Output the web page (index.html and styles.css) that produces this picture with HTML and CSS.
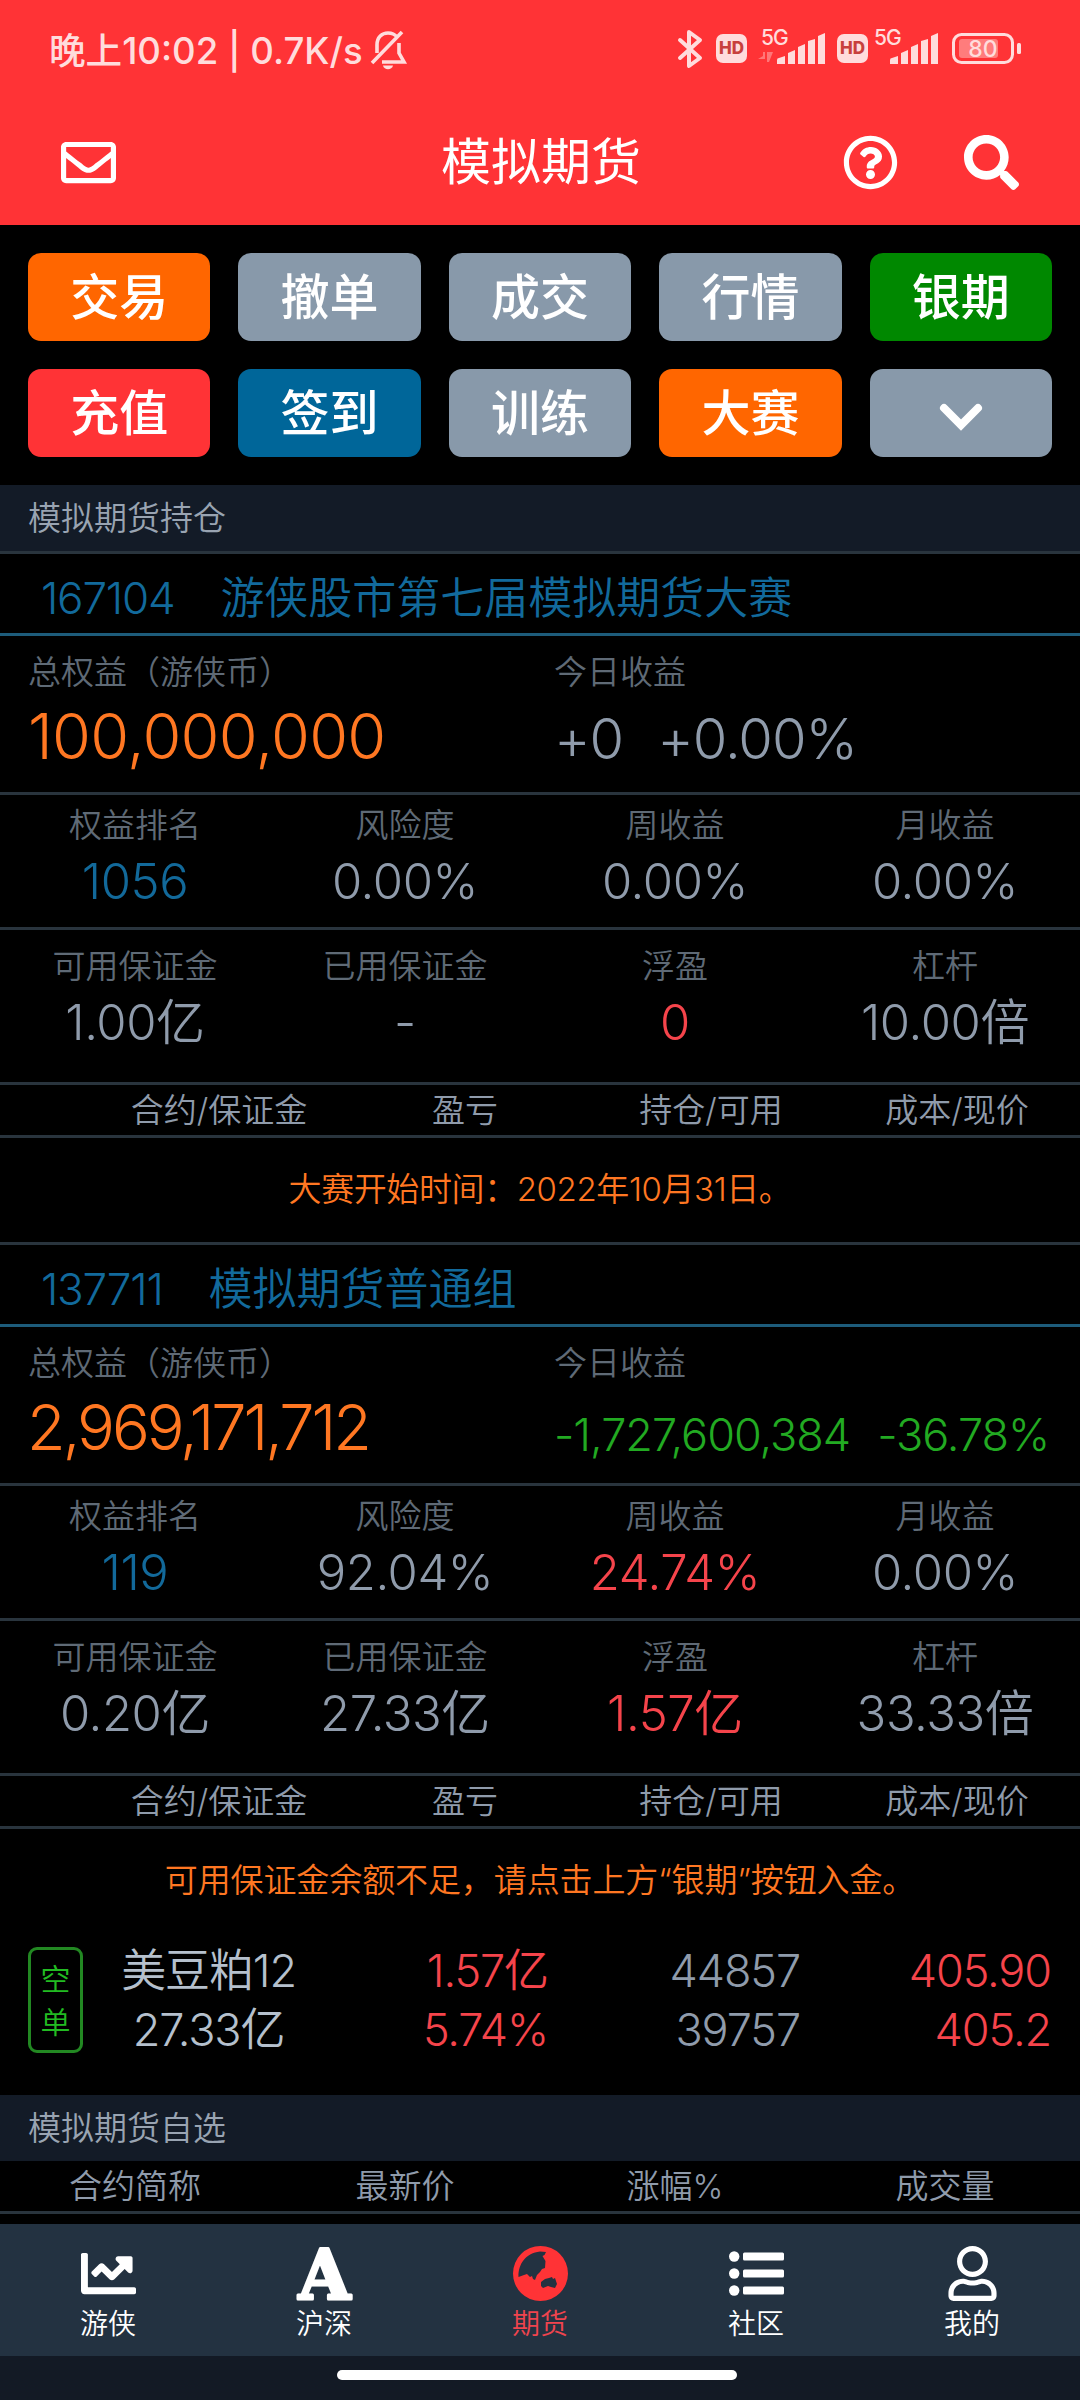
FILE: index.html
```html
<!DOCTYPE html>
<html lang="zh-CN">

<head>
    <meta charset="UTF-8">
    <meta name="viewport" content="width=device-width, initial-scale=1.0">
    <title>模拟期货</title>
    <link rel="stylesheet" href="styles.css">
</head>

<body>
    <header>
        <!-- phone status bar -->
        <div class="status">
            <span class="time">晚上10:02 | 0.7K/s</span>
            <svg class="bell" width="36" height="40" viewBox="0 0 36 40" fill="none" stroke="#ffdcdc" stroke-width="3.6">
                <path d="M7 23V15C7 7 12 3 18 3c4 0 7 1.500 9 4M29 13v10l5 9H12M32 2L2 33" />
                <path d="M13 35.500h10c-1 5-9 5-10 0z" fill="#ffdcdc" stroke="none" />
            </svg>
            <div class="signals">
                <svg class="bluetooth" width="26" height="40" viewBox="0 0 26 40" fill="none" stroke="#ffdcdc" stroke-width="4" stroke-linejoin="round" stroke-linecap="round">
                    <path d="M3 11l20 18-11 8V3l11 8L3 29" />
                </svg>
                <span class="hd">HD</span>
                <svg class="bars" width="68" height="38" viewBox="0 0 68 38" fill="#ffdcdc">
                    <text x="3" y="17" class="net">5G</text>
                    <path d="M0 31h7v-7h-2v4zM9 24h6l-4 10H9z" opacity=".4" />
                    <path d="M19 36v-4q0-2 2-2l6-2v8zM30 36V25l7-3v14zM40 36V19l7-3v20zM50 36V13l7-2v25zM60 36V8l7-3v31z" />
                </svg>
                <span class="hd second">HD</span>
                <svg class="bars two" width="68" height="38" viewBox="4 0 68 38" fill="#ffdcdc">
                    <text x="7" y="17" class="net">5G</text>
                    <path d="M23 36v-4q0-2 2-2l6-2v8zM34 36V25l7-3v14zM44 36V19l7-3v20zM54 36V13l7-2v25zM64 36V8l7-3v31z" />
                </svg>
                <svg class="battery" width="70" height="32" viewBox="0 0 70 32">
                    <rect x="1.500" y="1.500" width="59" height="28" rx="8" fill="none" stroke="#ffdcdc" stroke-width="3" />
                    <rect x="7" y="6" width="39" height="19" rx="3" fill="#ff7c7c" />
                    <rect x="65" y="10" width="4" height="11" rx="1.500" fill="#ffdcdc" />
                    <text x="31" y="24" text-anchor="middle" fill="#ffdcdc" class="percent">80</text>
                </svg>
            </div>
        </div>

        <div class="topbar">
            <svg class="mail" viewBox="0 0 512 512">
                <path d="M464 64H48C21.490 64 0 85.490 0 112v288c0 26.510 21.490 48 48 48h416c26.510 0 48-21.490 48-48V112c0-26.510-21.490-48-48-48zm0 48v40.805c-22.422 18.259-58.168 46.651-134.587 106.490-16.841 13.247-50.201 45.072-73.413 44.701-23.208.375-56.579-31.459-73.413-44.701C106.180 199.465 70.425 171.067 48 152.805V112h416zM48 400V214.398c22.914 18.251 55.409 43.862 104.938 82.646 21.857 17.205 60.134 55.186 103.062 54.955 42.717.231 80.509-37.199 103.053-54.947 49.528-38.783 82.032-64.401 104.947-82.653V400H48z" />
            </svg>
            <h1>模拟期货</h1>
            <svg class="help" viewBox="0 0 512 512">
                <path d="M256 8C119.043 8 8 119.083 8 256c0 136.997 111.043 248 248 248s248-111.003 248-248C504 119.083 392.957 8 256 8zm0 448c-110.532 0-200-89.431-200-200 0-110.495 89.472-200 200-200 110.491 0 200 89.471 200 200 0 110.530-89.431 200-200 200zm107.244-255.200c0 67.052-72.421 68.084-72.421 92.863V300c0 6.627-5.373 12-12 12h-45.647c-6.627 0-12-5.373-12-12v-8.659c0-35.745 27.100-50.034 47.579-61.516 17.561-9.845 28.324-16.541 28.324-29.579 0-17.246-21.999-28.693-39.784-28.693-23.189 0-33.894 10.977-48.942 29.969-4.057 5.120-11.460 6.071-16.666 2.124l-27.824-21.098c-5.107-3.872-6.251-11.066-2.644-16.363C184.846 131.491 214.940 112 261.794 112c49.071 0 101.450 38.304 101.450 88.800zM298 368c0 23.159-18.841 42-42 42s-42-18.841-42-42 18.841-42 42-42 42 18.841 42 42z" />
            </svg>
            <svg class="search" viewBox="0 0 512 512">
                <path d="M505 442.700L405.300 343c-4.500-4.500-10.600-7-17-7H372c27.600-35.300 44-79.700 44-128C416 93.100 322.900 0 208 0S0 93.100 0 208s93.100 208 208 208c48.300 0 92.700-16.400 128-44v16.300c0 6.400 2.500 12.500 7 17l99.700 99.700c9.400 9.400 24.600 9.400 33.900 0l28.300-28.300c9.400-9.400 9.400-24.600.1-34zM208 336c-70.700 0-128-57.200-128-128 0-70.700 57.200-128 128-128 70.700 0 128 57.200 128 128 0 70.700-57.200 128-128 128z" />
            </svg>
        </div>
    </header>

    <main>
        <div class="menu">
            <button class="bg-orange">交易</button>
            <button>撤单</button>
            <button>成交</button>
            <button>行情</button>
            <button class="bg-green">银期</button>
            <button class="bg-red">充值</button>
            <button class="bg-blue">签到</button>
            <button>训练</button>
            <button class="bg-orange">大赛</button>
            <button>
                <svg width="44" height="28" viewBox="0 0 44 28" fill="none" stroke="#fff" stroke-width="8" stroke-linecap="round">
                    <path d="M5 5l17 17L39 5" />
                </svg>
            </button>
        </div>

        <h2 class="section line">模拟期货持仓</h2>

        <!-- contest account -->
        <section class="account">
            <h3><span>167104</span>游侠股市第七届模拟期货大赛</h3>
            <div class="assets">
                <div class="total">
                    <p class="label">总权益（游侠币）</p>
                    <p class="big orange">100,000,000</p>
                </div>
                <div>
                    <p class="label">今日收益</p>
                    <p class="today"><span>+0</span><span>+0.00%</span></p>
                </div>
            </div>
            <div class="stats">
                <div><p class="label">权益排名</p><p class="num blue">1056</p></div>
                <div><p class="label">风险度</p><p class="num">0.00%</p></div>
                <div><p class="label">周收益</p><p class="num">0.00%</p></div>
                <div><p class="label">月收益</p><p class="num">0.00%</p></div>
            </div>
            <div class="stats margin-stats">
                <div><p class="label">可用保证金</p><p class="num">1.00亿</p></div>
                <div><p class="label">已用保证金</p><p class="num">-</p></div>
                <div><p class="label">浮盈</p><p class="num red">0</p></div>
                <div><p class="label">杠杆</p><p class="num">10.00倍</p></div>
            </div>
            <div class="thead hold-head">
                <span>合约/保证金</span>
                <span>盈亏</span>
                <span>持仓/可用</span>
                <span>成本/现价</span>
            </div>
            <p class="notice line">大赛开始时间：2022年10月31日。</p>
        </section>

        <!-- normal account -->
        <section class="account">
            <h3><span>137711</span>模拟期货普通组</h3>
            <div class="assets">
                <div class="total">
                    <p class="label">总权益（游侠币）</p>
                    <p class="big orange tight">2,969,171,712</p>
                </div>
                <div>
                    <p class="label">今日收益</p>
                    <p class="today small green"><span>-1,727,600,384</span><span>-36.78%</span></p>
                </div>
            </div>
            <div class="stats">
                <div><p class="label">权益排名</p><p class="num blue">119</p></div>
                <div><p class="label">风险度</p><p class="num">92.04%</p></div>
                <div><p class="label">周收益</p><p class="num red">24.74%</p></div>
                <div><p class="label">月收益</p><p class="num">0.00%</p></div>
            </div>
            <div class="stats margin-stats">
                <div><p class="label">可用保证金</p><p class="num">0.20亿</p></div>
                <div><p class="label">已用保证金</p><p class="num">27.33亿</p></div>
                <div><p class="label">浮盈</p><p class="num red">1.57亿</p></div>
                <div><p class="label">杠杆</p><p class="num">33.33倍</p></div>
            </div>
            <div class="thead hold-head">
                <span>合约/保证金</span>
                <span>盈亏</span>
                <span>持仓/可用</span>
                <span>成本/现价</span>
            </div>
            <p class="notice">可用保证金余额不足，请点击上方“银期”按钮入金。</p>
            <div class="position">
                <div class="tag">空<br>单</div>
                <div class="name">美豆粕12<br>27.33亿</div>
                <div class="red">1.57亿<br>5.74%</div>
                <div>44857<br>39757</div>
                <div class="red">405.90<br>405.2</div>
            </div>
        </section>

        <h2 class="section">模拟期货自选</h2>
        <div class="thead">
            <span>合约简称</span>
            <span>最新价</span>
            <span>涨幅%</span>
            <span>成交量</span>
        </div>
    </main>

    <nav>
        <a>
            <svg viewBox="0 0 512 512">
                <path d="M496 384H64V80c0-8.840-7.160-16-16-16H16C7.160 64 0 71.160 0 80v336c0 17.670 14.330 32 32 32h464c8.840 0 16-7.160 16-16v-32c0-8.840-7.160-16-16-16zM464 96H345.940c-21.380 0-32.090 25.850-16.970 40.970l32.400 32.400L288 242.750l-73.370-73.370c-12.500-12.500-32.760-12.500-45.250 0l-68.690 68.690c-6.250 6.250-6.250 16.380 0 22.630l22.620 22.620c6.250 6.250 16.380 6.250 22.630 0L192 237.250l73.370 73.370c12.500 12.500 32.760 12.500 45.250 0l96-96 32.400 32.400c15.120 15.120 40.970 4.410 40.970-16.970V112c.01-8.840-7.150-16-15.990-16z" />
            </svg>
            游侠
        </a>
        <a>
            <svg viewBox="0 0 55 55">
                <text x="27.500" y="53" text-anchor="middle" textLength="52" lengthAdjust="spacingAndGlyphs" class="letter">A</text>
            </svg>
            沪深
        </a>
        <a class="active">
            <svg viewBox="0 0 55 55">
                <circle cx="27.500" cy="27.500" r="27.500" />
                <path class="land" d="M5.500 31C5 18 13 7 27 5.500l6 .5-1.500 3-2 1 3 5-.5 7-3 1-2 3-3 3-2 5-2-1-1-3-2 1-3-3-3 1z" />
                <path class="land" d="M28 36l4-3 4-1 3-1 1 2 2-1 2 6-2 4-4-1-3-1-5 2-2-2z" />
            </svg>
            期货
        </a>
        <a>
            <svg viewBox="0 0 55 55">
                <circle cx="5.200" cy="10.500" r="5.200" />
                <circle cx="5.200" cy="27.500" r="5.200" />
                <circle cx="5.200" cy="44.500" r="5.200" />
                <rect x="14" y="6.500" width="41" height="8" rx="1.500" />
                <rect x="14" y="23.500" width="41" height="8" rx="1.500" />
                <rect x="14" y="40.500" width="41" height="8" rx="1.500" />
            </svg>
            社区
        </a>
        <a>
            <svg viewBox="0 0 448 512">
                <path d="M313.600 304c-28.700 0-42.500 16-89.600 16-47.100 0-60.800-16-89.600-16C60.200 304 0 364.200 0 438.400V464c0 26.500 21.500 48 48 48h352c26.500 0 48-21.500 48-48v-25.600c0-74.200-60.200-134.400-134.400-134.400zM400 464H48v-25.600c0-47.600 38.800-86.400 86.400-86.400 14.600 0 38.300 16 89.600 16 51.700 0 74.900-16 89.600-16 47.600 0 86.400 38.800 86.400 86.400V464zM224 288c79.500 0 144-64.500 144-144S303.500 0 224 0 80 64.500 80 144s64.500 144 144 144zm0-240c52.900 0 96 43.100 96 96s-43.100 96-96 96-96-43.100-96-96 43.100-96 96-96z" />
            </svg>
            我的
        </a>
    </nav>
    <footer><div class="home-bar"></div></footer>
</body>

</html>
```
FILE: styles.css
```css
* {
    padding: 0;
    margin: 0;
    box-sizing: border-box;
}

body {
    height: 2400px;
    width: 1080px;
    display: flex;
    flex-direction: column;
    background-color: #000;
    color: #8f9bab;
    font-family: "Inter", "Noto Sans CJK SC", sans-serif;
    font-weight: 350;
    overflow: hidden;
}

svg {
    overflow: visible;
}

header {
    height: 225px;
    background-color: #ff3336;
    color: #fff;
}

/* status bar */
.status {
    height: 97px;
    padding: 0 58px 0 49px;
    display: flex;
    align-items: center;
    color: #ffdcdc;
}

.status .time {
    font-size: 36.6px;
    font-weight: 500;
    width: 321px;
    white-space: nowrap;
}

.bell {
    margin-top: 3px;
}

.signals {
    display: flex;
    align-items: center;
    margin-left: auto;
}

.hd {
    width: 31px;
    height: 29px;
    margin-left: 13px;
    border-radius: 7px;
    background-color: #ffdcdc;
    color: #c8403c;
    font-size: 17px;
    font-weight: 800;
    line-height: 29px;
    text-align: center;
}

.hd.second {
    margin-left: 11px;
}

.bars {
    margin-left: 11px;
    margin-top: -3px;
}

.bars.two {
    margin-left: 3px;
}

.net {
    font-size: 21px;
    font-weight: 500;
    letter-spacing: -1px;
}

.battery {
    margin-left: 13px;
}

.percent {
    font-size: 23px;
    font-weight: 500;
}

.topbar {
    height: 128px;
    padding: 2px 61px 0;
    display: flex;
    align-items: center;
}

.topbar svg {
    width: 55px;
    height: 55px;
    fill: #fff;
}

.topbar h1 {
    margin-left: 325px;
    font-size: 50px;
    font-weight: 400;
    line-height: 80px;
}

.topbar .help {
    margin-left: auto;
}

.topbar .search {
    margin-left: 66px;
}

/* buttons */
.menu {
    height: 260px;
    padding: 28px;
    display: grid;
    grid-template-columns: repeat(5, 1fr);
    gap: 28px;
}

.menu button {
    padding-top: 2px;
    border: none;
    border-radius: 13px;
    background-color: #8899aa;
    color: #fff;
    font-family: inherit;
    font-size: 49px;
    font-weight: 500;
    line-height: 80px;
}

.menu .bg-orange {
    background-color: #ff6600;
}

.menu .bg-green {
    background-color: #008800;
}

.menu .bg-red {
    background-color: #ff3336;
}

.menu .bg-blue {
    background-color: #006699;
}

.section {
    height: 66px;
    padding-left: 28px;
    background-color: #131b27;
    color: #99a4b2;
    font-size: 33px;
    font-weight: inherit;
    line-height: 66px;
}

.section.line {
    height: 69px;
}

.line,
.assets,
.stats,
.thead {
    border-bottom: 3px solid #29343d;
}

/* account */
.account h3 {
    height: 82px;
    padding-left: 41px;
    border-bottom: 3px solid #1d5c7b;
    color: #126a9c;
    font-size: 44px;
    font-weight: inherit;
    line-height: 88px;
}

.account h3 span {
    margin-right: 46px;
    letter-spacing: -1.2px;
}

.assets {
    height: 159px;
    padding: 16px 28px 0;
    display: flex;
}

.assets .total {
    width: 526px;
    flex-shrink: 0;
}

.label {
    color: #5f6a76;
    font-size: 33px;
    line-height: 41px;
}

.big {
    margin-top: 3px;
    font-size: 63px;
    line-height: 80px;
    letter-spacing: -0.7px;
}

.big.tight {
    margin-left: -1px;
    letter-spacing: -3px;
}

.today {
    margin-top: 6px;
    font-size: 56px;
    line-height: 80px;
    letter-spacing: -1px;
    white-space: nowrap;
}

.today span + span {
    margin-left: 34px;
}

.today.small {
    margin-top: 11px;
    font-size: 45px;
}

.today.small span + span {
    margin-left: 27px;
}

.stats {
    height: 135px;
    padding-top: 10px;
    display: grid;
    grid-template-columns: repeat(4, 1fr);
    text-align: center;
}

.num {
    font-size: 49px;
    line-height: 72px;
    letter-spacing: -0.4px;
}

.margin-stats {
    height: 155px;
    padding-top: 16px;
}

.thead {
    height: 53px;
    display: grid;
    grid-template-columns: repeat(4, 1fr);
    font-size: 33px;
    line-height: 50px;
    text-align: center;
}

.hold-head {
    padding-left: 96px;
}

.notice {
    height: 104px;
    color: #ff7722;
    font-size: 33px;
    line-height: 102px;
    letter-spacing: -0.1px;
    text-align: center;
}

.notice.line {
    height: 107px;
    letter-spacing: -0.4px;
}

.position {
    height: 162px;
    padding: 8px 28px;
    display: grid;
    grid-template-columns: 55px 213px 252px 252px 251px;
    font-size: 45px;
    line-height: 59px;
    letter-spacing: -1.1px;
    text-align: right;
}

.position .tag {
    height: 106px;
    margin-top: 6px;
    padding-top: 8px;
    border: 3px solid #228822;
    border-radius: 9px;
    color: #22bb22;
    font-size: 30px;
    line-height: 43px;
    letter-spacing: 0;
    text-align: center;
}

.position .name {
    justify-self: end;
    color: #b5c0cd;
    text-align: center;
}

.orange {
    color: #ff7722;
}

.blue {
    color: #12699a;
}

.red {
    color: #f5444b;
}

.green {
    color: #22aa22;
}

/* bottom navigation */
nav {
    height: 132px;
    margin-top: auto;
    display: flex;
    background-color: #233241;
}

nav a {
    flex: 1;
    padding-top: 22px;
    display: flex;
    flex-direction: column;
    align-items: center;
    color: #fff;
    font-size: 28px;
    line-height: 46px;
}

nav svg {
    width: 55px;
    height: 55px;
    fill: #fff;
}

nav .active {
    color: #f0444e;
}

nav .active svg {
    fill: #ff3336;
}

nav .active .land {
    fill: #233241;
}

.letter {
    font-family: "DejaVu Serif", serif;
    font-size: 70px;
    font-weight: 700;
    stroke: #fff;
    stroke-width: 3px;
    stroke-linejoin: round;
}

footer {
    height: 44px;
    padding-top: 14px;
    background-color: #131a25;
}

.home-bar {
    width: 400px;
    height: 10px;
    margin-left: 337px;
    border-radius: 5px;
    background-color: #fff;
}
```
